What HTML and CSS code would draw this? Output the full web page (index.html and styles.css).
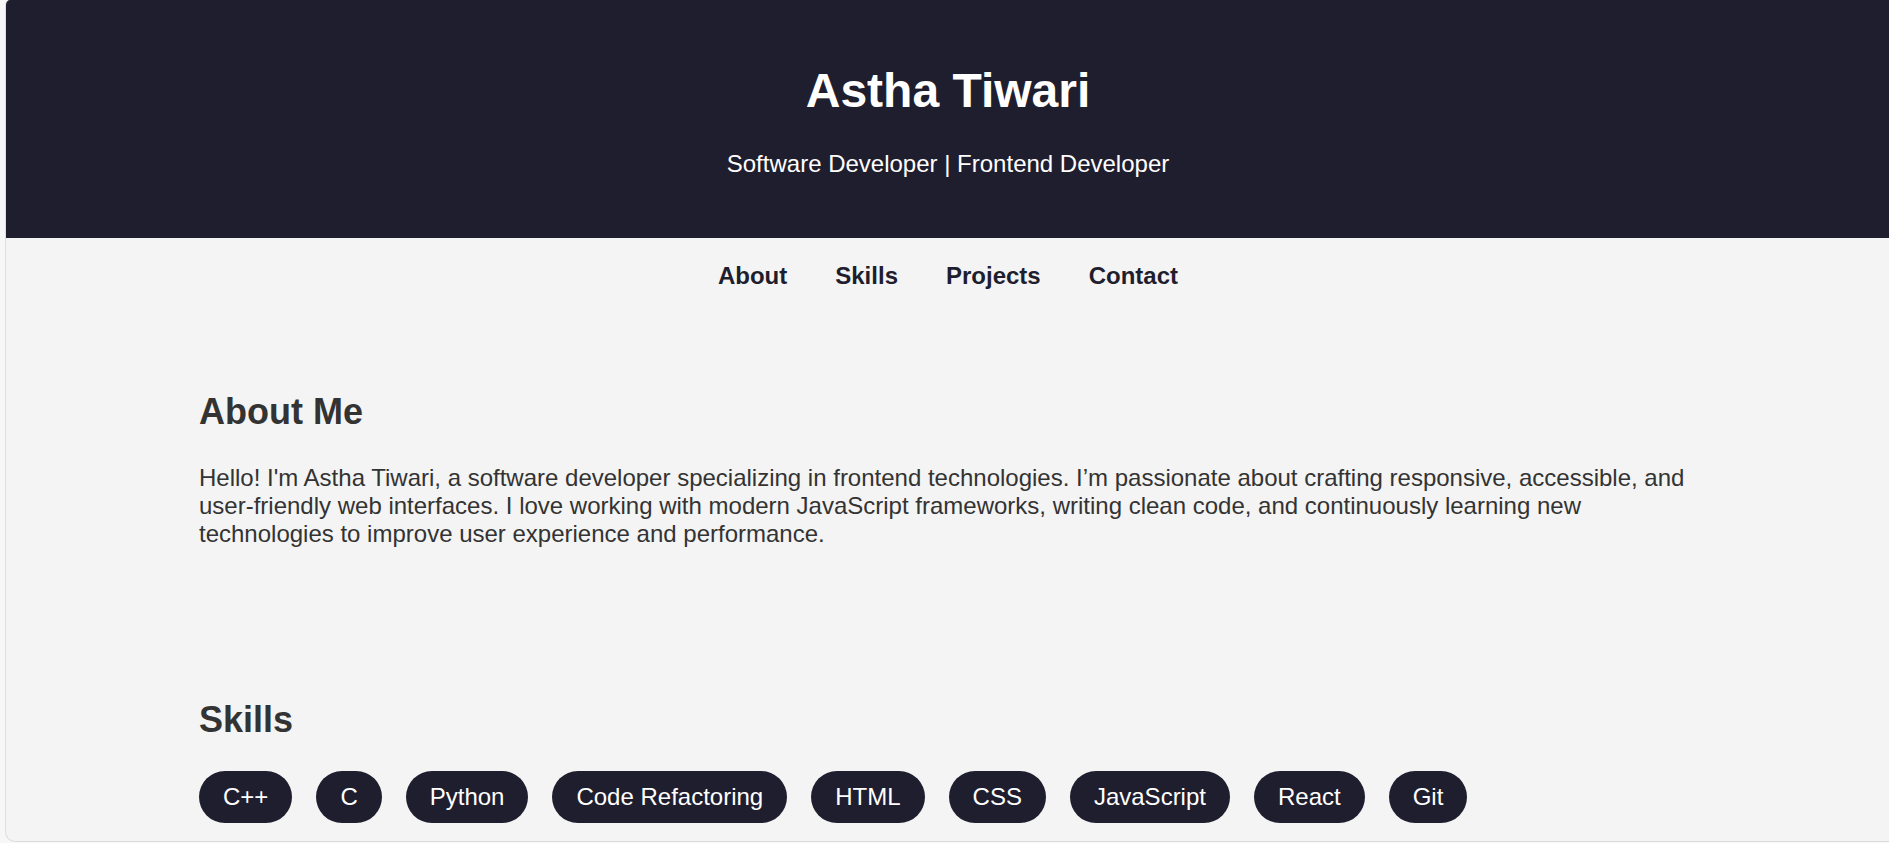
FILE: index.html
```html
<!DOCTYPE html>
<html lang="en">
<head>
<meta charset="utf-8">
<title>Astha Tiwari</title>
<link rel="stylesheet" href="styles.css">
</head>
<body>
<div class="window">
  <header class="hero">
    <h1 class="hero-title">Astha Tiwari</h1>
    <p class="hero-sub">Software Developer | Frontend Developer</p>
  </header>
  <nav class="nav">
    <a class="nav-link" href="#about">About</a>
    <a class="nav-link" href="#skills">Skills</a>
    <a class="nav-link" href="#projects">Projects</a>
    <a class="nav-link" href="#contact">Contact</a>
  </nav>
  <main class="content">
    <section class="section section-about" id="about">
      <h2 class="section-title">About Me</h2>
      <p class="section-text">Hello! I'm Astha Tiwari, a software developer specializing in frontend technologies. I’m passionate about crafting responsive, accessible, and user-friendly web interfaces. I love working with modern JavaScript frameworks, writing clean code, and continuously learning new technologies to improve user experience and performance.</p>
    </section>
    <section class="section section-skills" id="skills">
      <h2 class="section-title">Skills</h2>
      <ul class="skills">
        <li class="skill">C++</li>
        <li class="skill">C</li>
        <li class="skill">Python</li>
        <li class="skill">Code Refactoring</li>
        <li class="skill">HTML</li>
        <li class="skill">CSS</li>
        <li class="skill">JavaScript</li>
        <li class="skill">React</li>
        <li class="skill">Git</li>
      </ul>
    </section>
  </main>
</div>
</body>
</html>
```
FILE: styles.css
```css
html, body {
  margin: 0;
  padding: 0;
  height: 100%;
}

body {
  background: #f7f7f7;
  font-family: "Liberation Sans", Arial, sans-serif;
  font-size: 24px;
  color: #333333;
  overflow: hidden;
}

.window {
  margin-left: 5px;
  height: 841px;
  border-left: 1px solid #dedede;
  border-bottom: 1px solid #dcdcdc;
  border-radius: 5px 0 0 10px;
  background: #f4f4f4;
  overflow: hidden;
}

.hero {
  background: #1f1e2e;
  color: #ffffff;
  text-align: center;
  height: 238px;
  box-sizing: border-box;
  padding-top: 63px;
  padding-left: 1px;
}

.hero-title {
  margin: 0 0 32px;
  font-size: 48px;
  font-weight: bold;
  line-height: normal;
}

.hero-sub {
  margin: 0;
  font-size: 24px;
  line-height: normal;
}

.nav {
  display: flex;
  justify-content: center;
  gap: 48px;
  padding: 24px 0 24px 1px;
}

.nav-link {
  color: #1f1e2e;
  font-weight: bold;
  text-decoration: none;
  font-size: 24px;
  line-height: normal;
}

.content {
  max-width: 1497px;
  margin: 0 auto;
}

.section-about {
  padding-top: 77px;
}

.section-skills {
  padding-top: 151px;
}

.section-title {
  margin: 0;
  font-size: 36px;
  font-weight: bold;
  color: #333333;
  line-height: normal;
}

.section-text {
  margin: 31px 0 0;
  font-size: 24px;
  line-height: normal;
  color: #333333;
}

.skills {
  list-style: none;
  margin: 30px 0 0;
  padding: 0;
  display: flex;
  flex-wrap: wrap;
  gap: 24px;
}

.skill {
  background: #1f1e2e;
  color: #ffffff;
  padding: 12px 24px;
  border-radius: 30px;
  font-size: 24px;
  line-height: normal;
}
```
